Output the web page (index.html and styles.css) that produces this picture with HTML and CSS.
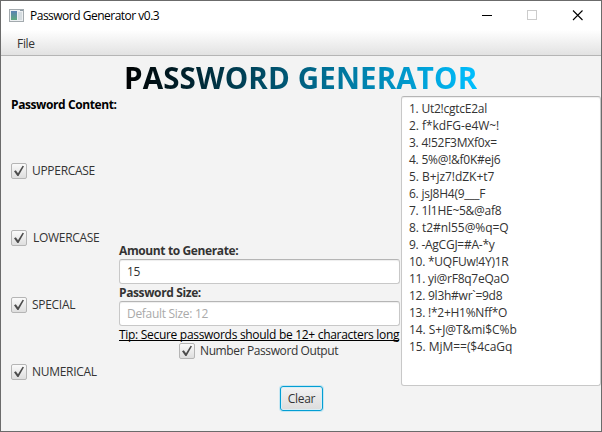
FILE: index.html
```html
<!DOCTYPE html>
<html lang="en">
<head>
<meta charset="utf-8">
<title>Password Generator v0.3</title>
<link rel="stylesheet" href="styles.css">
</head>
<body>
<div class="window">
  <header class="titlebar">
    <svg class="app-icon" width="15" height="13" viewBox="0 0 15 13">
      <defs><linearGradient id="pane" x1="0" y1="0" x2="0" y2="1"><stop offset="0" stop-color="#5b82b4"/><stop offset="1" stop-color="#5fa97d"/></linearGradient></defs>
      <rect x=".5" y=".5" width="14" height="12" fill="#edf0f2" stroke="#a3aaae"/>
      <rect x="2" y="2" width="6" height="9" fill="url(#pane)"/>
      <rect x="9" y="3" width="4" height="8" fill="#d5dce0"/>
      <rect x="11" y="1" width="3" height="1" fill="#8c9ba5"/>
    </svg>
    <span class="caption">Password Generator v0.3</span>
    <svg class="controls" width="102" height="11" viewBox="0 0 102 11" fill="none">
      <path d="M0 5.5h10" stroke="#000"/>
      <rect x="45.500" y=".5" width="9" height="9" stroke="#ccc"/>
      <path d="M91 .5l9.500 9.500M100.500 .5L91 10" stroke="#000" stroke-width="1.100"/>
    </svg>
  </header>
  <nav class="menubar"><span class="menu">File</span></nav>
  <main>
    <h1><span>PASSWORD GENERATOR</span></h1>
    <div class="columns">
      <section class="content">
        <h2>Password Content:</h2>
        <label class="check upper"><i class="box"><svg width="14" height="14" viewBox="0 0 14 14"><path d="M2 7.300L3.800 6.200L6 9.200L10.600 1.800L12 2.300L6.500 12H5.400Z"/></svg></i><span>UPPERCASE</span></label>
        <label class="check lower"><i class="box"><svg width="14" height="14" viewBox="0 0 14 14"><path d="M2 7.300L3.800 6.200L6 9.200L10.600 1.800L12 2.300L6.500 12H5.400Z"/></svg></i><span>LOWERCASE</span></label>
        <label class="check special"><i class="box"><svg width="14" height="14" viewBox="0 0 14 14"><path d="M2 7.300L3.800 6.200L6 9.200L10.600 1.800L12 2.300L6.500 12H5.400Z"/></svg></i><span>SPECIAL</span></label>
        <label class="check numerical"><i class="box"><svg width="14" height="14" viewBox="0 0 14 14"><path d="M2 7.300L3.800 6.200L6 9.200L10.600 1.800L12 2.300L6.500 12H5.400Z"/></svg></i><span>NUMERICAL</span></label>
      </section>
      <section class="settings">
        <div class="field-label amount">Amount to Generate:</div>
        <div class="field">15</div>
        <div class="field-label size">Password Size:</div>
        <div class="field prompt">Default Size: 12</div>
        <div class="tip"><span>Tip: Secure passwords should be 12+ characters long</span></div>
        <label class="check output"><i class="box"><svg width="14" height="14" viewBox="0 0 14 14"><path d="M2 7.300L3.800 6.200L6 9.200L10.600 1.800L12 2.300L6.500 12H5.400Z"/></svg></i><span>Number Password Output</span></label>
      </section>
      <section class="results">
        <div>1. Ut2!cgtcE2al</div>
        <div class="wide">2. f*kdFG-e4W~!</div>
        <div>3. 4!52F3MXf0x=</div>
        <div>4. 5%@!&amp;f0K#ej6</div>
        <div class="wide">5. B+jz7!dZK+t7</div>
        <div>6. jsJ8H4(9___F</div>
        <div>7. 1l1HE~5&amp;@af8</div>
        <div class="wide">8. t2#nl55@%q=Q</div>
        <div>9. -AgCGJ=#A-*y</div>
        <div>10. *UQFUw!4Y)1R</div>
        <div>11. yi@rF8q7eQaO</div>
        <div>12. 9l3h#wr`=9d8</div>
        <div>13. !*2+H1%Nff*O</div>
        <div class="wide">14. S+J@T&amp;mi$C%b</div>
        <div class="wide">15. MjM==($4caGq</div>
      </section>
    </div>
    <div class="actions"><button>Clear</button></div>
  </main>
</div>
</body>
</html>
```
FILE: styles.css
```css
* { box-sizing: border-box; }
body { margin: 0; }
.window {
  width: 602px; height: 432px;
  border: 1px solid #6b6b6b;
  background: #f3f3f3;
  font: 12px/16px "Open Sans", "Noto Sans", sans-serif;
  letter-spacing: -0.3px;
  color: #333;
  white-space: nowrap;
  overflow: hidden;
}
.titlebar { display: flex; align-items: center; height: 29px; padding: 0 17px 0 8px; background: #fff; color: #000; }
.caption { margin-left: 6px; letter-spacing: -0.5px; }
.controls { margin-left: auto; }
.menubar { height: 26px; padding: 6px 16px 0; background: linear-gradient(#fff, #e2e2e2); border-bottom: 1px solid #b5b5b5; }
h1 { margin: 0; height: 40px; padding-left: 123px; font-size: 29.500px; line-height: 43px; letter-spacing: 0.15px; }
h1 span { background: linear-gradient(to right, #000 0%, #00bfff 100%); background-clip: text; -webkit-background-clip: text; color: transparent; display: inline-block; }
.columns { display: grid; grid-template-columns: 108px 281px 201px; grid-template-rows: 290px; padding-left: 10px; }
.content { display: flex; flex-direction: column; }
h2 { margin: 0 0 50px; font-size: 12px; line-height: 17px; letter-spacing: -0.4px; color: #000; }
.check { display: flex; align-items: center; gap: 5px; height: 16px; }
.content .check { margin-bottom: 51px; }
.content .check:last-child { margin-bottom: 0; }
.check.lower { gap: 6px; }
.output span { letter-spacing: -0.39px; }
.box { display: block; width: 16px; height: 16px; border: 1px solid #b5b5b5; border-radius: 2px; background: linear-gradient(#fafafa, #dedede); flex: none; }
.box svg { display: block; fill: #4c4c4c; }
.settings { padding-top: 147px; }
.field-label { height: 16px; font-weight: 700; letter-spacing: -0.38px; }
.size { height: 17px; padding-top: 1px; }
.field { height: 25px; padding: 4px 7px 0; background: #fff; border: 1px solid #c8c8c8; border-top-color: #b5b5b5; border-radius: 3px; box-shadow: inset 0 1px 1px #eee; }
.prompt { color: #aaa; }
.tip { height: 17px; padding-top: 1px; color: #000; }
.tip span { display: inline-block; height: 14px; border-bottom: 1px solid #000; }
.output { margin-left: 60px; }
.results { margin-left: 1px; padding: 3px 7px; line-height: 17px; letter-spacing: -0.25px; background: #fff; border: 1px solid #c8c8c8; border-top-color: #b5b5b5; border-radius: 3px; box-shadow: inset 0 1px 1px #eee; }
.results .wide { letter-spacing: -0.05px; }
.actions { padding-left: 279px; }
button { display: block; width: 43px; height: 25px; padding: 0; border: 1px solid #039ed3; border-radius: 3px; background: linear-gradient(#f3f3f3, #dcdcdc); box-shadow: 0 0 0 1px #c5e6f2, inset 0 0 0 1px #d9eef5; font: inherit; letter-spacing: inherit; color: #333; }
```
